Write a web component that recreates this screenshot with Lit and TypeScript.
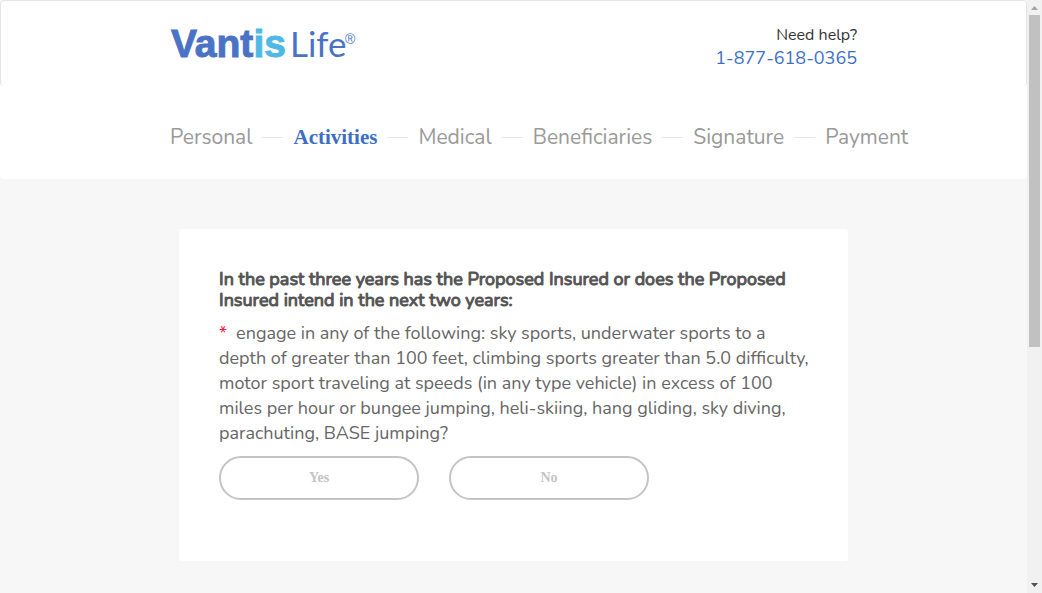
import { LitElement, html, css } from "lit";
import { customElement, state } from "lit/decorators.js";

@customElement("brand-logo")
class BrandLogo extends LitElement {
  static styles = css`
    :host { display: block; }
    .logo { display: block; width: 190px; height: 40px; overflow: visible; }
    .bold { font: 700 39px "Liberation Sans", Arial, sans-serif; fill: #4b73c5; stroke: #4b73c5; stroke-width: 1px; }
    .accent { fill: #50b8e4; stroke: #50b8e4; }
    .light { font: 400 35px Lato, sans-serif; fill: #4b73c5; }
    .mark { font: 400 14px "Liberation Sans", Arial, sans-serif; fill: #4b73c5; }
  `;
  render() {
    return html`<svg class="logo" viewBox="0 0 190 40" role="img" aria-label="Vantis Life">
      <text class="bold" x="1" y="32">Vant<tspan class="accent">is</tspan></text>
      <text class="light" x="120" y="32">Life</text>
      <text class="mark" x="175" y="19">®</text>
    </svg>`;
  }
}

@customElement("step-nav")
class StepNav extends LitElement {
  static styles = css`
    :host { display: block; }
    .steps { display: flex; align-items: center; gap: 10px; margin: 0; padding: 0; list-style: none; white-space: nowrap; }
    .step { display: flex; align-items: center; gap: 10px; }
    .step + .step::before { content: ""; width: 21px; height: 1px; background: #e7e7e7; }
    .link { font: 400 21px/30px Nunito, Lato, sans-serif; color: #999; text-decoration: none; }
    .current { font: 700 21px/30px "Liberation Serif", serif; color: #3c6fc4; }
  `;
  private steps = ["Personal", "Activities", "Medical", "Beneficiaries", "Signature", "Payment"];
  render() {
    return html`<nav aria-label="Application steps"><ol class="steps">
      ${this.steps.map((s, i) => html`<li class="step"><a href="#" class=${i === 1 ? "link current" : "link"}>${s}</a></li>`)}
    </ol></nav>`;
  }
}

@customElement("scroll-rail")
class ScrollRail extends LitElement {
  static styles = css`
    :host { display: flex; flex-direction: column; align-items: center; background: #f1f1f1; }
    .arrow { display: block; width: 15px; height: 15px; flex: none; }
    .track { flex: 1; align-self: stretch; padding: 0 2px; }
    .thumb { height: 59%; background: #c1c1c1; }
  `;
  render() {
    return html`
      <svg class="arrow" viewBox="0 0 15 15"><path d="M4 10h7L7.500 6z" fill="#a3a3a3"/></svg>
      <div class="track"><div class="thumb"></div></div>
      <svg class="arrow" viewBox="0 0 15 15"><path d="M4 5h7L7.500 9z" fill="#505050"/></svg>`;
  }
}

@customElement("app-root")
class AppRoot extends LitElement {
  static styles = css`
    * { box-sizing: border-box; }
    :host { display: grid; grid-template-columns: minmax(0, 1fr) 15px; height: 100vh; overflow: hidden; background: #f7f7f7; font-family: Nunito, Lato, sans-serif; }
    .page { overflow: hidden; }
    .masthead { background: #fff; border-radius: 4px; }
    .topbar { height: 86px; padding-top: 24px; border: 1px solid #e5e5e5; border-bottom: 0; border-radius: 4px; }
    .container { width: 100%; max-width: 687px; margin: 0 auto; }
    .row { display: flex; justify-content: space-between; }
    .help { text-align: right; font-size: 16px; line-height: 20px; color: #333; }
    .phone { display: block; font-size: 18px; line-height: 26px; color: #3c6fc4; text-decoration: none; }
    .steps { padding: 36px 0 27px; }
    .card { max-width: 669px; min-height: 332px; margin: 50px auto 0; padding: 40px 30px 60px 40px; background: #fff; border-radius: 3px; }
    .title { margin: 0 0 10px; font-size: 18px; line-height: 21px; font-weight: 400; -webkit-text-stroke: 1px #555; color: #555; }
    .question { min-width: 0; margin: 0; padding: 0; border: 0; }
    .text { padding: 0; font-size: 18px; line-height: 25px; font-weight: 400; color: #666; }
    .required { margin-right: 9px; color: #ff1744; }
    .answers { display: flex; gap: 30px; margin-top: 10px; }
    .answer { width: 200px; height: 44px; padding: 0; border: 2px solid #c4c4c4; border-radius: 22px; background: #fff; font: 700 14px/20px "Liberation Serif", serif; color: #c4c4c4; cursor: pointer; }
    .answer[aria-pressed="true"] { border-color: #3c6fc4; color: #3c6fc4; }
  `;
  @state() private answer = "";
  render() {
    return html`
      <div class="page">
        <header class="masthead">
          <div class="topbar"><div class="container row">
            <brand-logo></brand-logo>
            <div class="help">Need help?<a class="phone" href="tel:18776180365">1-877-618-0365</a></div>
          </div></div>
          <div class="container steps"><step-nav></step-nav></div>
        </header>
        <main class="card">
          <h1 class="title">In the past three years has the Proposed Insured or does the Proposed<br>Insured intend in the next two years:</h1>
          <fieldset class="question">
            <legend class="text"><span class="required">*</span>engage in any of the following: sky sports, underwater sports to a<br>depth of greater than 100 feet, climbing sports greater than 5.0 difficulty,<br>motor sport traveling at speeds (in any type vehicle) in excess of 100<br>miles per hour or bungee jumping, heli-skiing, hang gliding, sky diving,<br>parachuting, BASE jumping?</legend>
            <div class="answers">
              ${["Yes", "No"].map((a) => html`<button class="answer" type="button" aria-pressed=${this.answer === a} @click=${() => (this.answer = a)}>${a}</button>`)}
            </div>
          </fieldset>
        </main>
      </div>
      <scroll-rail aria-hidden="true"></scroll-rail>`;
  }
}
